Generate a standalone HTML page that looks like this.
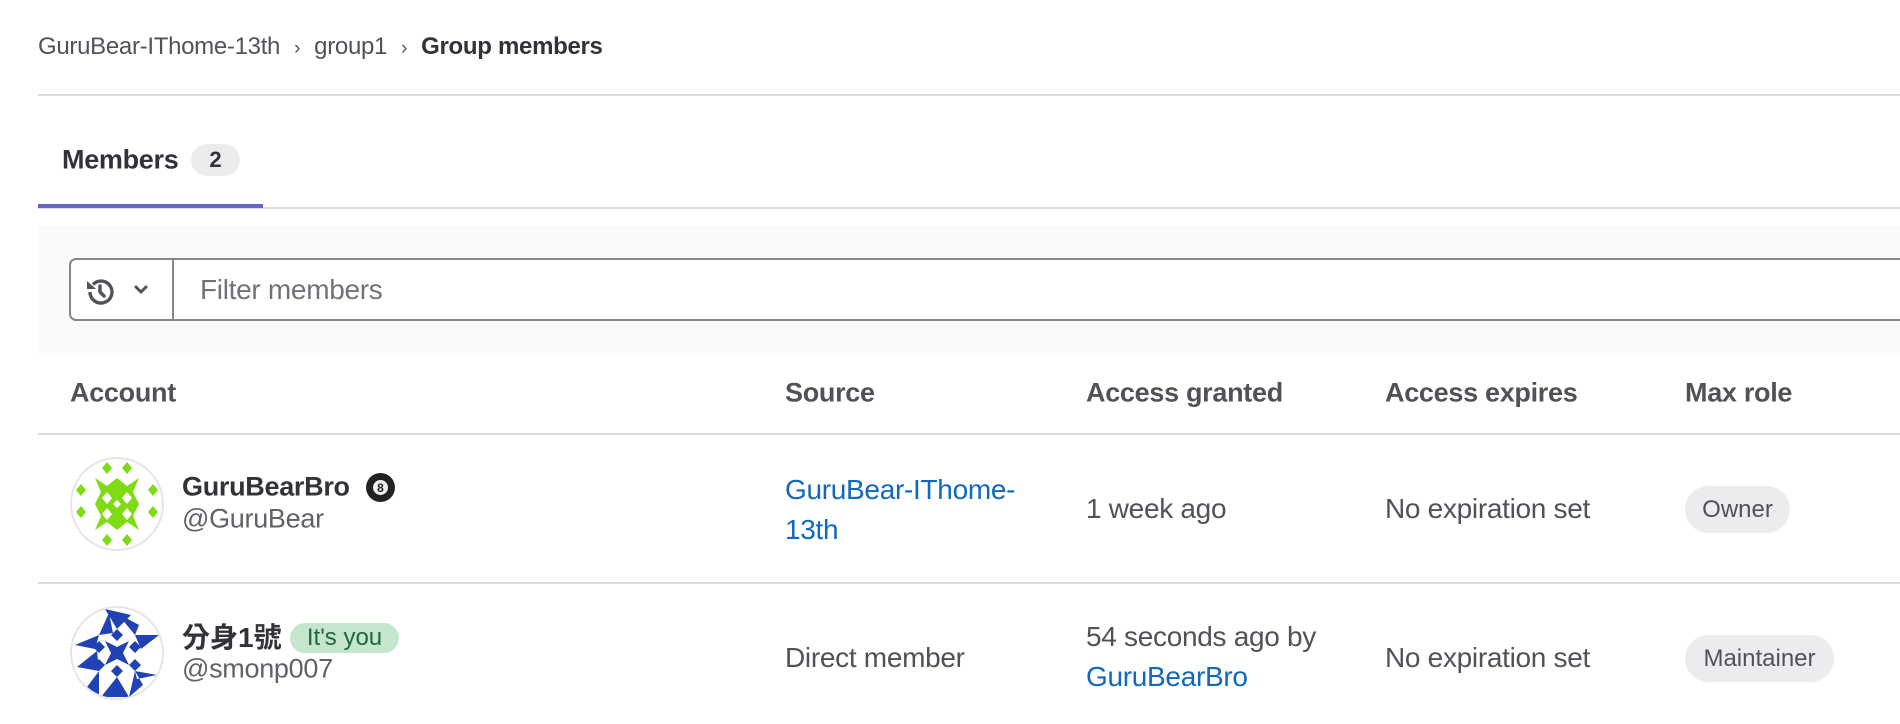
<!DOCTYPE html>
<html><head><meta charset="utf-8"><style>
*{margin:0;padding:0;box-sizing:border-box}
body{width:1900px;height:724px;background:#fff;font-family:"Liberation Sans","Noto Sans CJK TC",sans-serif;color:#333238;position:relative;overflow:hidden}
.a{position:absolute;white-space:nowrap}
.v{transform:translateY(-50%)}
.lnk{color:#1068bf}
.t{font-size:28px;letter-spacing:-0.3px}
.h{font-size:27px;font-weight:bold;color:#535158;letter-spacing:-0.3px}
.badge{position:absolute;background:#ececef;border-radius:24px;color:#535158;font-size:24px;display:flex;align-items:center;justify-content:center}
</style></head><body>
<div class="a v" style="left:38px;top:47px;font-size:24px;color:#535158;letter-spacing:-0.3px">GuruBear-IThome-13th<span style="margin:0 14px;font-size:19px">›</span>group1<span style="margin:0 14px;font-size:19px">›</span><b style="color:#333238">Group members</b></div>
<div class="a" style="left:38px;right:0;top:94px;height:2px;background:#dcdcde"></div>

<div class="a v" style="left:62px;top:160px;font-size:27px;font-weight:bold;letter-spacing:-0.3px">Members</div>
<div class="badge" style="left:191px;top:144px;width:49px;height:32px;font-weight:bold;color:#333238;font-size:22px">2</div>
<div class="a" style="left:38px;right:0;top:207px;height:2px;background:#dcdcde"></div>
<div class="a" style="left:38px;width:225px;top:204px;height:4px;background:#6666c4"></div>

<div class="a" style="left:38px;right:0;top:226px;height:127px;background:#fafafa"></div>
<div class="a" style="left:69px;right:-20px;top:258px;height:63px;border:2px solid #868686;border-radius:7px;background:#fff"></div>
<div class="a" style="left:172px;top:259px;width:2px;height:61px;background:#868686"></div>
<svg class="a" style="left:84px;top:276px" width="32" height="32" viewBox="0 0 32 32" fill="none" stroke="#535158" stroke-width="3.4"><path d="M6 16a11 11 0 1 0 3-7.5" /><path d="M16 10v6l4 4" stroke-linecap="round"/><polygon points="3,5 12,13 3,13" fill="#535158" stroke="none"/></svg>
<svg class="a" style="left:134px;top:284px" width="14" height="12" viewBox="0 0 14 12" fill="none" stroke="#535158" stroke-width="3" stroke-linecap="round" stroke-linejoin="round"><path d="M2 3l5 5 5-5"/></svg>
<div class="a v" style="left:200px;top:290px;font-size:28px;color:#737278;letter-spacing:-0.3px">Filter members</div>

<div class="a v h" style="left:70px;top:393px">Account</div>
<div class="a v h" style="left:785px;top:393px">Source</div>
<div class="a v h" style="left:1086px;top:393px">Access granted</div>
<div class="a v h" style="left:1385px;top:393px">Access expires</div>
<div class="a v h" style="left:1685px;top:393px">Max role</div>
<div class="a" style="left:38px;right:0;top:433px;height:2px;background:#dcdcde"></div>

<!-- row1 -->
<svg class="a" style="left:69px;top:456px" width="96" height="96" viewBox="0 0 96 96">
<defs><clipPath id="c1"><circle cx="48" cy="48" r="46"/></clipPath></defs>
<g clip-path="url(#c1)" fill="#7fdc14">
<path d="M38 6l5 6-5 6-5-6zM58 6l5 6-5 6-5-6zM38 78l5 6-5 6-5-6zM58 78l5 6-5 6-5-6zM12 28l5 6-5 6-5-6zM12 50l5 6-5 6-5-6zM84 28l5 6-5 6-5-6zM84 50l5 6-5 6-5-6z"/>
<path d="M26 22l12 8 10-8 10 8 12-8-6 14 6 12-6 12 6 14-12-8-10 8-10-8-12 8 6-14-6-12 6-12z"/>
<path d="M2 10h8v-8h-8zM86 2h8v8h-8zM2 86h8v8h-8zM86 86h8v8h-8z"/>
</g>
<g fill="#fff"><path d="M38 36l5 6-5 6-5-6zM58 36l5 6-5 6-5-6zM38 52l5 6-5 6-5-6zM58 52l5 6-5 6-5-6zM48 44l4 4-4 4-4-4z"/></g>
<circle cx="48" cy="48" r="46" fill="none" stroke="#e5e5e5" stroke-width="2"/></svg>
<div class="a v" style="left:182px;top:487px;font-size:27px;font-weight:bold;letter-spacing:-0.3px">GuruBearBro</div>
<div class="a" style="left:366px;top:473px;width:29px;height:29px;border-radius:50%;background:#222;color:#fff;font-size:14px;font-weight:bold;display:flex;align-items:center;justify-content:center"><span style="background:#eee;color:#222;border-radius:50%;width:15px;height:15px;display:flex;align-items:center;justify-content:center;font-size:12px">8</span></div>
<div class="a v" style="left:182px;top:519px;font-size:27px;color:#626168;letter-spacing:-0.3px">@GuruBear</div>
<div class="a v t lnk" style="left:785px;top:490px">GuruBear-IThome-</div>
<div class="a v t lnk" style="left:785px;top:530px">13th</div>
<div class="a v t" style="left:1086px;top:509px;color:#535158">1 week ago</div>
<div class="a v t" style="left:1385px;top:509px;color:#535158">No expiration set</div>
<div class="badge" style="left:1685px;top:486px;width:105px;height:47px">Owner</div>
<div class="a" style="left:38px;right:0;top:582px;height:2px;background:#dcdcde"></div>

<!-- row2 -->
<svg class="a" style="left:69px;top:605px" width="96" height="96" viewBox="0 0 96 96">
<defs><clipPath id="c2"><circle cx="48" cy="48" r="46"/></clipPath></defs>
<g clip-path="url(#c2)" fill="#2142b3">
<path d="M30 30l10-22 4 20zM66 30l-18-22 22 12zM30 66l-22-4 20-16zM66 66l22 4-20 4zM30 30l-24 10 20 4zM66 30l24 0-18 14zM30 66l0 26-12-10zM66 66l-6 26 14-12zM48 72l-16 20 28 0z M48 24l-12-20 26 6z"/>
<path d="M36 36l12 6 12-6-6 12 6 12-12-6-12 6 6-12z"/>
<path d="M30 36l6 6-6 6-6-6zM66 36l6 6-6 6-6-6zM30 54l6 6-6 6-6-6zM66 54l6 6-6 6-6-6zM42 30l6-6 6 6-6 6zM42 66l6-6 6 6-6 6z"/>
</g>
<circle cx="48" cy="48" r="46" fill="none" stroke="#e5e5e5" stroke-width="2"/></svg>
<div class="a v" style="left:182px;top:636px;font-size:28px;font-weight:bold">分身1號</div>
<div class="a" style="left:290px;top:623px;width:109px;height:30px;border-radius:16px;background:#c3e6cd;color:#24663b;font-size:24px;display:flex;align-items:center;justify-content:center">It's you</div>
<div class="a v" style="left:182px;top:669px;font-size:27px;color:#626168;letter-spacing:-0.3px">@smonp007</div>
<div class="a v t" style="left:785px;top:658px;color:#535158">Direct member</div>
<div class="a v t" style="left:1086px;top:637px;color:#535158">54 seconds ago by</div>
<div class="a v t lnk" style="left:1086px;top:677px">GuruBearBro</div>
<div class="a v t" style="left:1385px;top:658px;color:#535158">No expiration set</div>
<div class="badge" style="left:1685px;top:635px;width:149px;height:47px">Maintainer</div>
</body></html>
